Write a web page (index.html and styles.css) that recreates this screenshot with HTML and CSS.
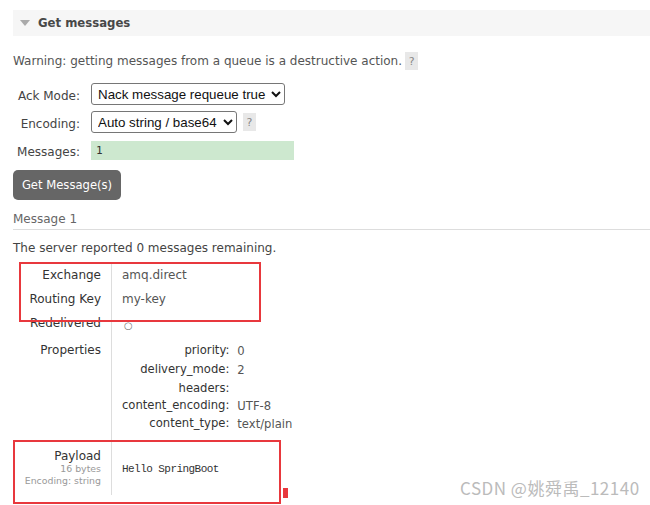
FILE: index.html
```html
<!DOCTYPE html>
<html>
<head>
<meta charset="utf-8">
<link rel="stylesheet" href="styles.css">
</head>
<body>
<div class="page">
  <div class="section-head"><span class="tri"></span><span>Get messages</span></div>
  <p class="warning">Warning: getting messages from a queue is a destructive action.<span class="help">?</span></p>
  <div class="form">
    <div class="row">
      <label class="lbl">Ack Mode:</label>
      <select class="sel sel-ack"><option>Nack message requeue true</option></select>
    </div>
    <div class="row">
      <label class="lbl">Encoding:</label>
      <select class="sel sel-enc"><option>Auto string / base64</option></select>
      <span class="help help-enc">?</span>
    </div>
    <div class="row">
      <label class="lbl">Messages:</label>
      <input class="num" type="text" value="1">
    </div>
  </div>
  <button class="btn">Get Message(s)</button>
  <h3 class="msg-title">Message 1</h3>
  <p class="remaining">The server reported <b>0</b> messages remaining.</p>
  <div class="details-wrap">
    <table class="details">
      <tr class="r"><th>Exchange</th><td>amq.direct</td></tr>
      <tr class="r"><th>Routing Key</th><td>my-key</td></tr>
      <tr class="r"><th>Redelivered</th><td><span class="circ">○</span></td></tr>
      <tr class="props-row">
        <th>Properties</th>
        <td>
          <table class="props">
            <tr class="h20"><th>priority:</th><td>0</td></tr>
            <tr class="h19"><th>delivery_mode:</th><td>2</td></tr>
            <tr class="h19"><th>headers:</th><td></td></tr>
            <tr class="h15"><th>content_encoding:</th><td>UTF-8</td></tr>
            <tr class="h20"><th>content_type:</th><td>text/plain</td></tr>
          </table>
        </td>
      </tr>
      <tr class="payload-row">
        <th>Payload<div class="sub">16 bytes</div><div class="sub">Encoding: string</div></th>
        <td><pre class="payload">Hello SpringBoot</pre></td>
      </tr>
    </table>
    <div class="mark mark-1"></div>
    <div class="mark mark-2"></div>
    <div class="mark-tick"></div>
  </div>
</div>
<div class="watermark">CSDN @姚舜禹_12140</div>
</body>
</html>
```

FILE: styles.css
```css
html, body {
  margin: 0;
  padding: 0;
  background: #fff;
}
body {
  font-family: "DejaVu Sans", Verdana, sans-serif;
  font-size: 12px;
  color: #444;
  width: 650px;
  height: 505px;
  overflow: hidden;
  position: relative;
}
.page {
  padding: 10px 0 0 13px;
}
.section-head {
  height: 26px;
  background: #f6f6f6;
  display: flex;
  align-items: center;
  padding-left: 7px;
  gap: 8px;
  font-weight: bold;
  font-size: 11.7px;
  color: #484848;
}
.tri {
  width: 0;
  height: 0;
  border-left: 5px solid transparent;
  border-right: 5px solid transparent;
  border-top: 6px solid #aaa;
}
.warning {
  margin: 16px 0 0 0;
  height: 18px;
  display: flex;
  align-items: center;
  gap: 3px;
  color: #555;
}
.help {
  display: inline-flex;
  align-items: center;
  justify-content: center;
  width: 13px;
  height: 18px;
  background: #e8e8e8;
  color: #888;
  font-size: 11px;
}
.form {
  margin-top: 13px;
  display: flex;
  flex-direction: column;
  gap: 6px;
}
.row {
  display: flex;
  align-items: center;
  height: 22px;
}
.lbl {
  width: 67px;
  text-align: right;
  margin-right: 11px;
  padding-top: 3px;
  color: #444;
}
.sel {
  height: 22px;
  border: 1px solid #767676;
  border-radius: 3px;
  background: #fff;
  font-family: "Liberation Sans", Arial, sans-serif;
  font-size: 13.33px;
  color: #111;
  padding: 0 2px;
  margin: 0;
}
.sel-ack { width: 194px; }
.sel-enc { width: 146px; }
.help-enc {
  margin-left: 6px;
}
.row:last-child {
  height: 20px;
  margin-top: 1px;
}
.num {
  width: 203px;
  height: 19px;
  box-sizing: border-box;
  border: none;
  background: #cde8cf;
  padding: 0 5px;
  margin: 0;
  font-family: "DejaVu Sans Mono", monospace;
  font-size: 11px;
  color: #333;
  outline: none;
}
.btn {
  display: block;
  margin-top: 10px;
  width: 108px;
  height: 30px;
  background: #666;
  color: #fff;
  border: none;
  border-radius: 5px;
  font-family: "DejaVu Sans", Verdana, sans-serif;
  font-size: 11.6px;
  padding: 0;
}
.msg-title {
  margin: 10px 0 0 0;
  font-weight: normal;
  font-size: 12px;
  line-height: 19px;
  color: #666;
  border-bottom: 1px solid #ddd;
}
.remaining {
  margin: 10px 0 0 0;
  line-height: 16px;
  color: #444;
}
.remaining b {
  font-weight: normal;
}
.details-wrap {
  position: relative;
  margin-top: 7px;
}
.details {
  border-collapse: collapse;
}
.details > tbody > tr > th {
  width: 88px;
  padding: 0 10px 0 0;
  text-align: right;
  font-weight: normal;
  color: #333;
  vertical-align: top;
  white-space: nowrap;
}
.details > tbody > tr > td {
  border-left: 1px solid #ddd;
  padding: 0 0 0 10px;
  color: #555;
  vertical-align: top;
}
.r > th, .r > td {
  height: 24px;
  line-height: 24px;
}
.circ {
  font-size: 10px;
  color: #777;
  position: relative;
  top: 2px;
  left: 2px;
}
.props-row > th {
  padding-top: 7px !important;
  line-height: 14px;
}
.props-row > td {
  padding-top: 4px !important;
  padding-bottom: 8px !important;
}
.props {
  border-collapse: collapse;
  font-size: 11.6px;
}
.props th {
  width: 104px;
  text-align: right;
  font-weight: normal;
  color: #333;
  padding: 0 8px 0 0;
  white-space: nowrap;
}
.props td {
  color: #555;
  padding: 0;
}
.props td { position: relative; top: 1px; }
.h20 th, .h20 td { height: 20px; line-height: 20px; }
.h19 th, .h19 td { height: 19px; line-height: 19px; }
.h15 th, .h15 td { height: 15px; line-height: 15px; }
.payload-row > th {
  padding-top: 8px !important;
  padding-bottom: 8px !important;
  line-height: 14px;
  color: #333;
}
.sub {
  font-size: 9.4px;
  line-height: 12px;
  color: #999;
}
.payload-row > td {
  padding-top: 22px !important;
}
.payload {
  margin: 0;
  font-family: "Liberation Mono", "Courier New", monospace;
  font-size: 11px;
  letter-spacing: -0.55px;
  color: #333;
}
.mark {
  position: absolute;
  border: 2px solid #e8383d;
  box-sizing: border-box;
}
.mark-1 {
  left: 6px;
  top: -1px;
  width: 242px;
  height: 60px;
}
.mark-2 {
  left: 0;
  top: 177px;
  width: 268px;
  height: 64px;
}
.mark-tick {
  position: absolute;
  left: 270px;
  top: 225px;
  width: 5px;
  height: 10px;
  background: #e8383d;
}
.watermark {
  position: absolute;
  left: 460px;
  top: 477px;
  font-family: "Noto Sans CJK SC", "DejaVu Sans", sans-serif;
  font-size: 17px;
  color: #bbb;
  line-height: 22px;
  letter-spacing: 0.5px;
}
```
